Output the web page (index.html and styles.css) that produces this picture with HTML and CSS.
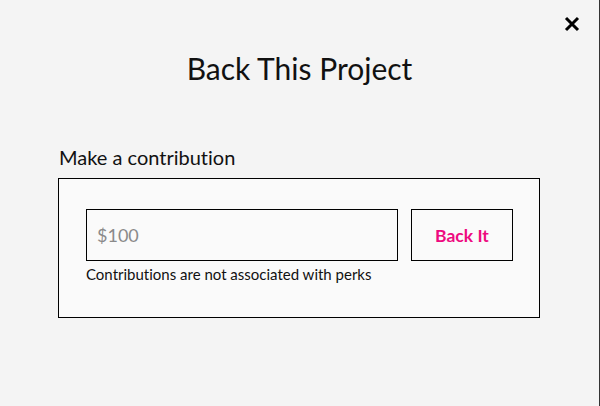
FILE: index.html
```html
<!DOCTYPE html>
<html>
<head>
<meta charset="utf-8">
<link rel="stylesheet" href="styles.css">
</head>
<body>
<div class="modal">
  <button class="close" aria-label="Close">
    <svg width="16" height="16" viewBox="0 0 16 16"><path d="M2 2L14 14M14 2L2 14" stroke="#000" stroke-width="3" fill="none"/></svg>
  </button>
  <h1 class="title">Back This Project</h1>
  <div class="section">
    <div class="label">Make a contribution</div>
    <div class="box">
      <div class="row">
        <input class="amount" type="text" placeholder="$100">
        <button class="back">Back It</button>
      </div>
      <div class="note">Contributions are not associated with perks</div>
    </div>
  </div>
</div>
</body>
</html>
```
FILE: styles.css
```css
html, body {
  margin: 0;
  padding: 0;
  height: 100%;
}
body {
  background: #f4f4f4;
  font-family: Lato, "Open Sans", sans-serif;
  font-variant-ligatures: none;
  color: #111;
  border-right: 1px solid #333;
  box-sizing: border-box;
}
.modal {
  position: relative;
  padding-top: 48px;
}
.close {
  position: absolute;
  top: 16px;
  right: 19px;
  background: none;
  border: 0;
  padding: 0;
  width: 16px;
  height: 16px;
  cursor: pointer;
}
.close svg { display: block; }
.title {
  margin: 0;
  text-align: center;
  font-weight: 400;
  font-size: 30px;
  line-height: 40px;
}
.section {
  margin: 57px 0 0 58px;
  width: 482px;
}
.label {
  font-size: 20px;
  line-height: 24px;
  margin-bottom: 9px;
  padding-left: 1px;
}
.box {
  border: 1px solid #000;
  background: #fafafa;
  padding: 30px 26px 0 27px;
  box-sizing: content-box;
  height: 108px;
}
.row {
  display: flex;
  gap: 13px;
}
.amount {
  width: 312px;
  height: 52px;
  box-sizing: border-box;
  border: 1px solid #000;
  background: #fafafa;
  padding: 0 10px;
  font-family: inherit;
  font-size: 18px;
  font-variant-ligatures: none;
  outline: none;
}
.amount::placeholder { color: #8a8a8a; }
.back {
  width: 102px;
  height: 52px;
  box-sizing: border-box;
  border: 1px solid #000;
  background: #fafafa;
  color: #ee0a80;
  font-family: inherit;
  font-weight: 700;
  font-size: 17.5px;
}
.note {
  margin-top: 5px;
  font-size: 15px;
  line-height: 17px;
}
```
